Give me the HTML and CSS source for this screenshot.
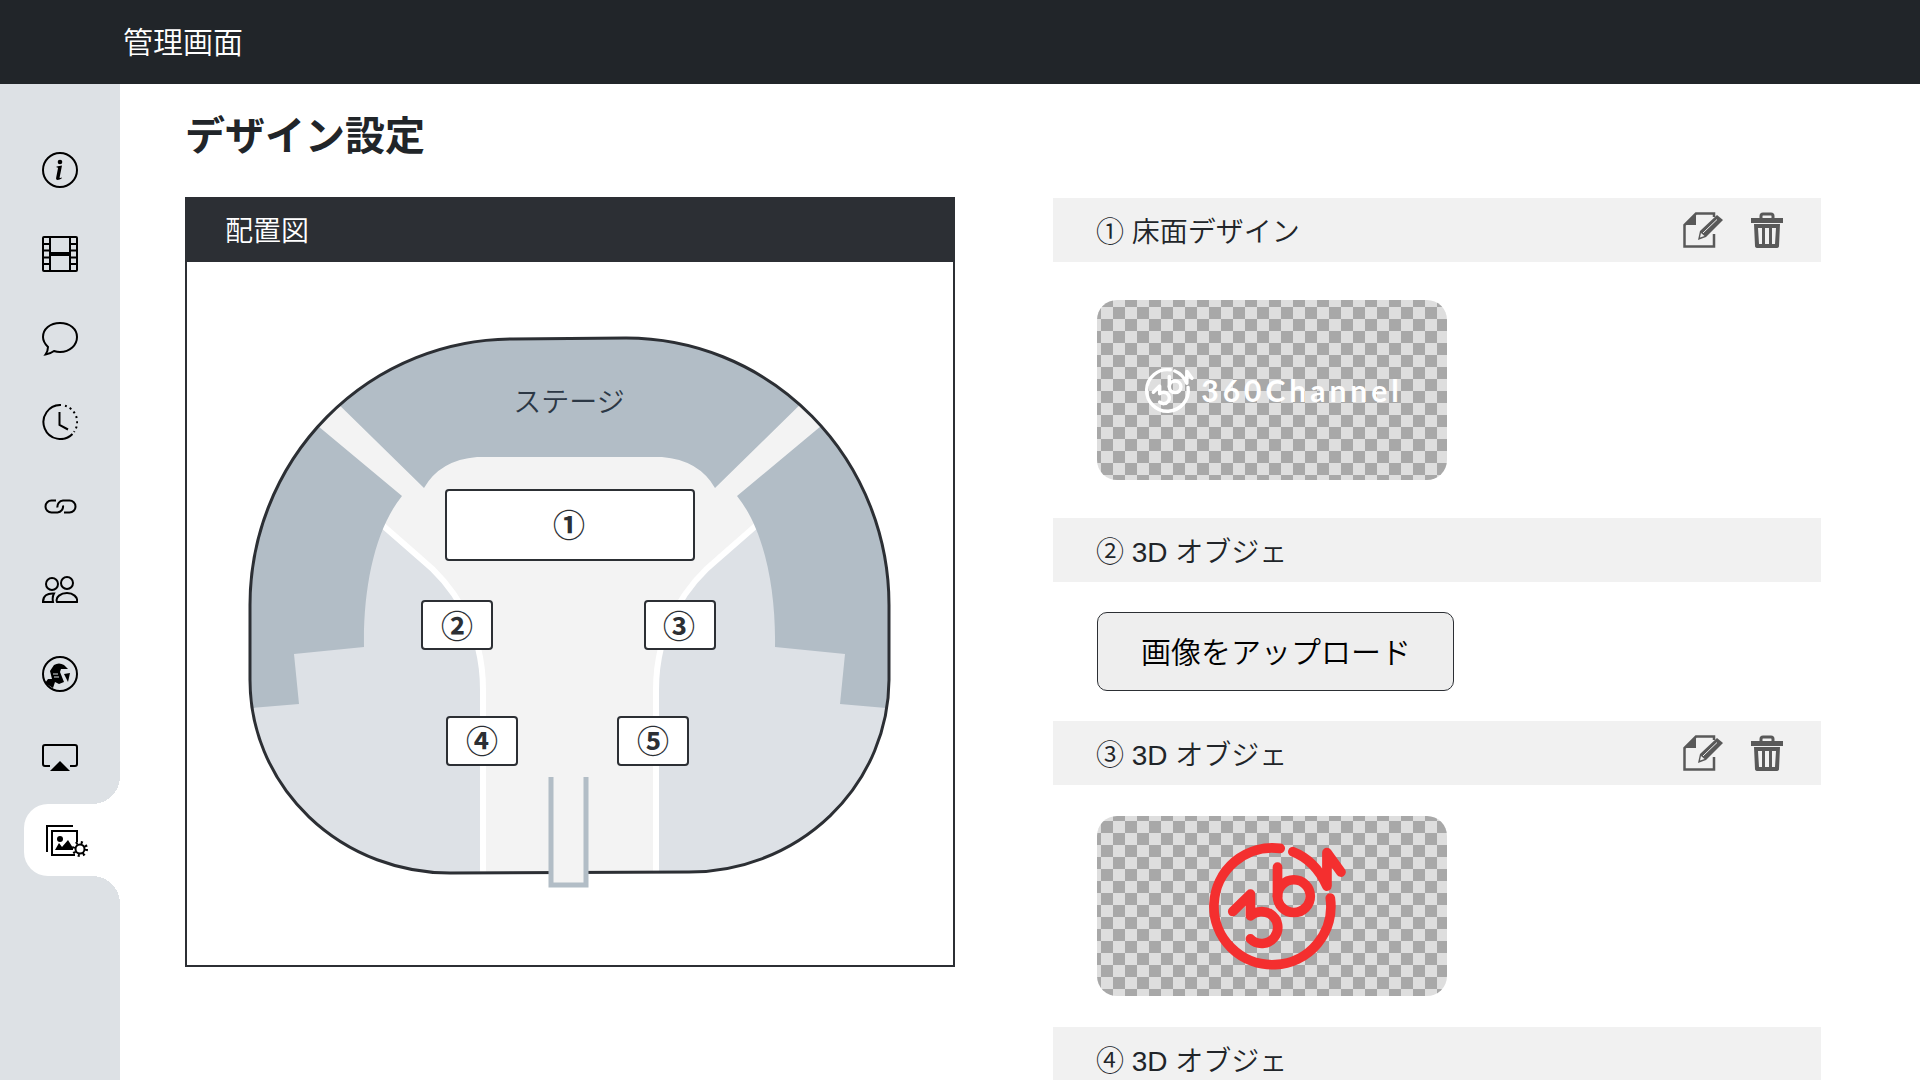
FILE: index.html
```html
<!DOCTYPE html>
<html lang="ja">
<head>
    <meta charset="UTF-8">
    <meta name="viewport" content="width=device-width, initial-scale=1">
    <title>管理画面</title>
    <link rel="stylesheet" href="styles.css">
</head>
<body>
<svg class="defs" aria-hidden="true">
    <symbol id="logo" viewBox="354 95 446 446">
        <g fill="none" stroke="currentColor" stroke-width="29" stroke-linecap="round" stroke-linejoin="round">
            <path d="M750 293A175 175 0 1 1 600 144"/>
            <path d="M638 154Q705 180 740 257V157L782 215"/>
            <path d="M592 200V287"/>
            <circle cx="641" cy="287" r="49"/>
            <path d="M458 333L511 281V346C527 332 551 329 570 340A48 48 0 1 1 511 415"/>
        </g>
    </symbol>
    <symbol id="edit" viewBox="0 0 40 36">
        <path d="M31 22V34.500H1.500V13L13 1.500H31V5" fill="none" stroke="currentColor" stroke-width="2.500"/>
        <path d="M1 13L13 1V13Z" fill="currentColor"/>
        <path d="M15 28L17 19L34 3L40 8L23 25Z" fill="currentColor"/>
        <path d="M20 21L34 7.500" stroke="#f1f1f1" stroke-width="1"/>
        <path d="M17 25.500L18 21L21.500 24Z" fill="#f1f1f1"/>
    </symbol>
    <symbol id="trash" viewBox="0 0 32 36">
        <path d="M10 7V4Q10 2 12 2H20Q22 2 22 4V7" fill="none" stroke="currentColor" stroke-width="3"/>
        <path d="M0 6H32V11H0Z" fill="currentColor"/>
        <path fill-rule="evenodd" fill="currentColor" d="M3 12H29L28 34Q28 36 25 36H7Q4 36 4 34ZM7 16L8 32H11V16ZM14 16V32H18V16ZM21 16V32H24L25 16Z"/>
    </symbol>
</svg>

<header class="header">管理画面</header>
<div class="layout">
    <nav class="sidebar">
        <a class="nav-item" href="#info" aria-label="基本情報">
            <svg viewBox="0 0 36 36"><circle cx="18" cy="18" r="17"/><circle class="fill" cx="18" cy="10" r="2.3"/><path class="fill" d="M14.6 14.4L20 13.6L17.6 25.4Q17.6 26.6 19.8 25.6L19.6 26.6Q17.6 28 15.6 28Q13.6 28 14.2 25.6L16 16.2Q16 15.2 14.4 15.2Z"/></svg>
        </a>
        <a class="nav-item" href="#movie" aria-label="動画">
            <svg viewBox="0 0 36 36"><rect x="1" y="1" width="34" height="34" rx="1"/><path d="M8 1V35M28 1V35M1 8H8M1 14.5H8M1 21.5H8M1 28H8M28 8H35M28 14.5H35M28 21.5H35M28 28H35"/><path d="M8 18H28" stroke-width="4"/></svg>
        </a>
        <a class="nav-item" href="#chat" aria-label="チャット">
            <svg viewBox="0 0 36 36"><path d="M6 27C3 24 1 21 1 17C1 9 8 3 18 3S35 9 35 17S28 32 18 32Q15 32 12 31Q8 34 3.500 34.500Q6 31 6 27Z"/></svg>
        </a>
        <a class="nav-item" href="#schedule" aria-label="スケジュール">
            <svg viewBox="0 0 36 36"><path d="M19 1A17 17 0 1 0 30.500 30"/><path d="M23 1.800A17 17 0 0 1 32 28" stroke-dasharray="2 3.200"/><path d="M17.500 8V21L26 25.500"/></svg>
        </a>
        <a class="nav-item" href="#link" aria-label="リンク">
            <svg viewBox="0 0 36 36"><path d="M14 12.500H9.500A6 6 0 0 0 9.500 24.500H15.500A6 6 0 0 0 21 17.500"/><path d="M22 24.500H27.500A6 6 0 0 0 27.500 12.500H21A6 6 0 0 0 15.500 19.500"/></svg>
        </a>
        <a class="nav-item" href="#member" aria-label="メンバー">
            <svg viewBox="0 0 36 36"><circle cx="10" cy="12" r="6"/><circle cx="25" cy="11" r="6"/><path d="M15 30C13 25 19 21 25 21S36 25 35 30ZM11 30H1C1 24 5 21 12 21.500Q10 25 11 30Z"/></svg>
        </a>
        <a class="nav-item" href="#world" aria-label="ワールド">
            <svg viewBox="0 0 36 36"><circle cx="18" cy="18" r="17"/><path class="fill" d="M8 15L12 9Q17 6 22 9L26 13L19 13L18 16L22 26L17 28L13 26L11 32L3 27L6 23L10 23L9 19ZM22 18L28 17L26 26Z"/><path d="M11 18H16M12 21H17" stroke="#dde1e5" stroke-width="1"/></svg>
        </a>
        <a class="nav-item" href="#screen" aria-label="スクリーン">
            <svg viewBox="0 0 36 36"><path d="M8 26H3Q1 26 1 24V7Q1 5 3 5H33Q35 5 35 7V24Q35 26 33 26H28"/><path class="fill" d="M18 21L28 31H8Z"/></svg>
        </a>
        <a class="nav-item active" href="#design" aria-label="デザイン設定" aria-current="page">
            <svg class="wide" viewBox="0 0 44 36"><path d="M2 30V4H28"/><path d="M32 20V9H7V33H30"/><path class="fill" d="M10 28L14 21L17 25L23 18L28 26V28Z"/><circle class="fill" cx="15" cy="17" r="3"/><circle cx="35" cy="27" r="4.500"/><circle cx="35" cy="27" r="6.500" stroke-width="3" stroke-dasharray="2 3.105"/></svg>
        </a>
    </nav>

    <main class="content">
        <h1>デザイン設定</h1>
        <div class="columns">
            <section class="map">
                <h2>配置図</h2>
                <svg viewBox="187 262 766 703" role="img" aria-label="会場の配置図">
                    <defs>
                        <path id="hall" d="M250 605A263 266 0 0 1 513 339L626 338A263 267 0 0 1 889 605V680A200 193 0 0 1 689 872L451 873A200 193 0 0 1 250 680Z"/>
                        <clipPath id="hall-clip"><use href="#hall"/></clipPath>
                        <g id="hall-side">
                            <path class="floor" d="M384 527L420 558C450 582 483 625 483 690V880H230V500Z"/>
                            <path class="aisle" d="M380 523L420 558C450 582 483 625 483 690V880"/>
                            <path class="stand" d="M306 416L402 496C376 528 363 585 364 647L294 654L299 704L240 709V416Z"/>
                        </g>
                    </defs>
                    <g clip-path="url(#hall-clip)">
                        <use href="#hall" class="ground"/>
                        <use href="#hall-side"/>
                        <use href="#hall-side" transform="translate(1139 0) scale(-1 1)"/>
                        <path class="stand" d="M324 390L424 488Q440 460 477 457H662Q699 460 715 488L815 390V320H324Z"/>
                    </g>
                    <use href="#hall" class="wall"/>
                    <path class="gate" d="M551 777V885H586V777"/>
                    <text class="stage" x="569" y="412">ステージ</text>
                    <g class="spot">
                        <rect x="446" y="490" width="248" height="70" rx="3"/>
                        <rect x="422" y="601" width="70" height="48" rx="3"/>
                        <rect x="645" y="601" width="70" height="48" rx="3"/>
                        <rect x="447" y="717" width="70" height="48" rx="3"/>
                        <rect x="618" y="717" width="70" height="48" rx="3"/>
                        <text x="569" y="537">①</text>
                        <text x="457" y="638">②</text>
                        <text x="679" y="638">③</text>
                        <text x="482" y="753">④</text>
                        <text x="653" y="753">⑤</text>
                    </g>
                </svg>
            </section>

            <div class="items">
                <section>
                    <div class="item-head">
                        <h2>① 床面デザイン</h2>
                        <button class="icon-button" aria-label="編集"><svg width="40" height="36"><use href="#edit"/></svg></button>
                        <button class="icon-button" aria-label="削除"><svg width="32" height="36"><use href="#trash"/></svg></button>
                    </div>
                    <div class="item-body floor-body">
                        <div class="thumb thumb-floor">
                            <svg width="53" height="53"><use href="#logo"/></svg>
                            <span>360Channel</span>
                        </div>
                    </div>
                </section>
                <section>
                    <div class="item-head">
                        <h2>② 3D オブジェ</h2>
                    </div>
                    <div class="item-body upload-body">
                        <button class="upload">画像をアップロード</button>
                    </div>
                </section>
                <section>
                    <div class="item-head">
                        <h2>③ 3D オブジェ</h2>
                        <button class="icon-button" aria-label="編集"><svg width="40" height="36"><use href="#edit"/></svg></button>
                        <button class="icon-button" aria-label="削除"><svg width="32" height="36"><use href="#trash"/></svg></button>
                    </div>
                    <div class="item-body">
                        <div class="thumb">
                            <svg width="149" height="149"><use href="#logo"/></svg>
                        </div>
                    </div>
                </section>
                <section>
                    <div class="item-head">
                        <h2>④ 3D オブジェ</h2>
                    </div>
                </section>
            </div>
        </div>
    </main>
</div>
</body>
</html>
```
FILE: styles.css
```css
* {
    box-sizing: border-box;
}

body {
    display: flex;
    flex-direction: column;
    height: 100vh;
    margin: 0;
    overflow: hidden;
    color: #212529;
    background: #ffffff;
    font-family: "Liberation Sans", "Noto Sans CJK JP", sans-serif;
    font-weight: 350;
}

h1,
h2 {
    margin: 0;
}

.defs {
    position: absolute;
    width: 0;
    height: 0;
}

.header {
    flex: none;
    height: 84px;
    padding-left: 123px;
    color: #ffffff;
    background: #212529;
    font-size: 30px;
    line-height: 86px;
}

.layout {
    display: flex;
    flex: 1;
    min-height: 0;
}

/* sidebar */
.sidebar {
    display: flex;
    flex: none;
    flex-direction: column;
    gap: 12px;
    width: 120px;
    padding-top: 50px;
    background: #dde1e5;
}

.nav-item {
    display: flex;
    flex: none;
    justify-content: center;
    align-items: center;
    height: 72px;
    color: #000000;
}

.nav-item svg {
    width: 36px;
    height: 36px;
    fill: none;
    stroke: currentColor;
    stroke-width: 2;
}

.nav-item svg.wide {
    width: 44px;
}

.nav-item .fill {
    fill: currentColor;
    stroke: none;
}

.nav-item.active {
    position: relative;
    margin-top: -2px;
    margin-left: 24px;
    padding-right: 10px;
    background: #ffffff;
    border-radius: 24px 0 0 24px;
}

.nav-item.active::before,
.nav-item.active::after {
    content: "";
    position: absolute;
    right: 0;
    width: 28px;
    height: 28px;
}

.nav-item.active::before {
    bottom: 100%;
    background: radial-gradient(circle at 0 0, transparent 28px, #ffffff 28px);
}

.nav-item.active::after {
    top: 100%;
    background: radial-gradient(circle at 0 100%, transparent 28px, #ffffff 28px);
}

/* content */
.content {
    flex: 1;
    padding: 22px 97px 0 65px;
    overflow: hidden;
}

h1 {
    margin-bottom: 31px;
    font-size: 40px;
    font-weight: 700;
    line-height: 60px;
}

h2 {
    font-size: 28px;
    font-weight: 350;
}

.columns {
    display: grid;
    grid-template-columns: 1fr 1fr;
    align-items: start;
    gap: 98px;
}

/* map */
.map {
    border: 2px solid #2c2f34;
}

.map h2 {
    height: 63px;
    padding-left: 38px;
    color: #ffffff;
    background: #2c2f34;
    line-height: 66px;
}

.map svg {
    display: block;
    width: 100%;
}

.ground {
    fill: #f3f3f3;
}

.floor {
    fill: #dde1e6;
}

.stand {
    fill: #b2bdc6;
}

.aisle {
    fill: none;
    stroke: #ffffff;
    stroke-width: 6;
}

.wall {
    fill: none;
    stroke: #2c2f34;
    stroke-width: 3;
}

.gate {
    fill: #f3f3f3;
    stroke: #b2bdc6;
    stroke-width: 5;
}

.stage {
    fill: #2c3845;
    font-size: 28px;
    text-anchor: middle;
}

.spot rect {
    fill: #ffffff;
    stroke: #2c2f34;
    stroke-width: 2;
}

.spot text {
    fill: #2c2f34;
    font-size: 32px;
    font-weight: 700;
    text-anchor: middle;
}

/* items */
.items {
    padding: 1px 2px 0 0;
}

.item-head {
    display: flex;
    align-items: center;
    gap: 28px;
    height: 64px;
    padding: 0 38px 0 43px;
    background: #f1f1f1;
}

.item-head h2 {
    flex: 1;
}

.icon-button {
    padding: 0;
    color: #595959;
    background: none;
    border: none;
    cursor: pointer;
}

.icon-button svg {
    display: block;
}

.item-body {
    padding: 31px 44px;
}

.floor-body {
    padding-top: 38px;
    padding-bottom: 38px;
}

.upload-body {
    padding-top: 30px;
    padding-bottom: 30px;
}

.thumb {
    display: flex;
    justify-content: center;
    align-items: center;
    width: 350px;
    height: 180px;
    color: #f42f2f;
    background: repeating-conic-gradient(#dedede 0 25%, #a8a8a8 0 50%) 4px 5px / 24px 24px;
    border-radius: 20px;
}

.thumb-floor {
    gap: 7px;
    color: #ffffff;
    background-position: 16px 7px;
    font-family: Lato, sans-serif;
    font-size: 30px;
    font-weight: 700;
    letter-spacing: 4px;
}

.upload {
    display: block;
    height: 79px;
    padding: 0 42px 4px 43px;
    color: #000000;
    background: #eeeeee;
    border: 1px solid #2c2f34;
    border-radius: 10px;
    font: inherit;
    font-size: 30px;
    cursor: pointer;
}
```
